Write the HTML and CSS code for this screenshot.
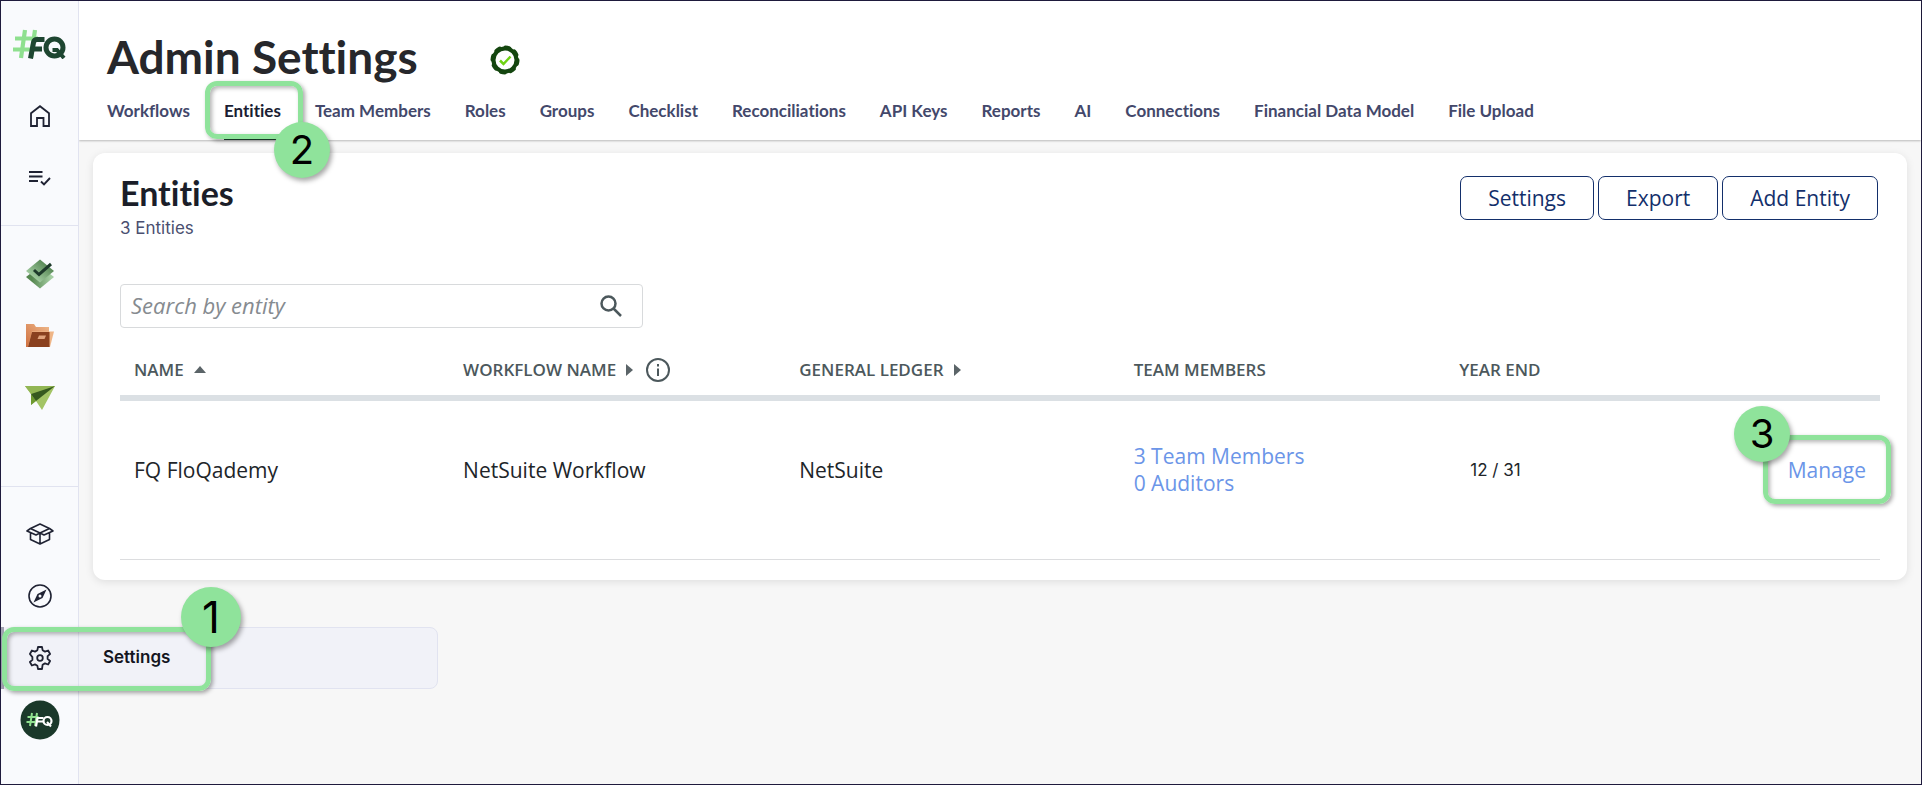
FILE: index.html
```
<!DOCTYPE html>
<html lang="en">
  <head>
    <meta charset="UTF-8" />
    <meta name="viewport" content="width=device-width, initial-scale=1.0" />
    <title>Admin Settings</title>
    <link rel="stylesheet" href="styles.css">
  </head>
  <body>
    <div class="app">
      <!-- Sidebar -->
      <nav class="sidebar" aria-label="Main">
        <a href="#" class="logo" aria-label="FloQast">
          <svg width="54" height="30" viewBox="0 0 54 30" fill="none">
            <path d="M12 1L8 29M22 1l-4 28M2 9.500h23M0 20.500h19" stroke="#8fe08f" stroke-width="4.200" />
            <path d="M17.500 29.500l3-16q.6-3 3.500-3h7.500M19 20h10" stroke="#1e4631" stroke-width="5" />
            <circle cx="41.500" cy="18.500" r="8.500" stroke="#1e4631" stroke-width="5" />
            <path d="M39.500 21h4.500l7 8" stroke="#1e4631" stroke-width="4" />
          </svg>
        </a>
        <div class="group group-top">
          <a href="#" class="item" aria-label="Home">
            <svg width="20" height="22" viewBox="0 0 20 22" fill="none" stroke="#1f2233" stroke-width="1.800">
              <path d="M1 21V8.200l9-7 9 7V21h-5.500v-8h-6.500v8z" />
            </svg>
          </a>
          <a href="#" class="item" aria-label="Tasks">
            <svg width="22" height="16" viewBox="0 0 22 16" fill="none" stroke="#1f2233" stroke-width="1.900">
              <path d="M0 2h13.500M0 6.500h13.500M0 11h9M12 11.500l3 3 6-6.500" />
            </svg>
          </a>
        </div>
        <div class="group group-apps">
          <a href="#" class="item" aria-label="Close">
            <svg width="28" height="30" viewBox="0 0 28 30">
              <defs>
                <linearGradient id="tile" x1="0" y1="1" x2="1" y2="0">
                  <stop offset="0.200" stop-color="#a6cfa4" />
                  <stop offset="0.800" stop-color="#548552" />
                </linearGradient>
                <linearGradient id="tileBack" x1="0" y1="0" x2="1" y2="0">
                  <stop offset="0.200" stop-color="#55864f" />
                  <stop offset="0.900" stop-color="#a6cfa4" />
                </linearGradient>
              </defs>
              <path d="M0 18l14-11 14 11-14 11.500z" fill="url(#tileBack)" />
              <path d="M0 12L14 0.500 28 12 14 23.500z" fill="url(#tile)" />
              <path d="M8 11l5 4.500L25 5" fill="none" stroke="#1e3a2b" stroke-width="3" />
            </svg>
          </a>
          <a href="#" class="item" aria-label="Documents">
            <svg width="28" height="24" viewBox="0 0 28 24">
              <defs>
                <linearGradient id="folder" x1="0" y1="1" x2="1" y2="0">
                  <stop offset="0" stop-color="#cf6f3f" />
                  <stop offset="1" stop-color="#efb98c" />
                </linearGradient>
              </defs>
              <path d="M0 0h8l2 3h13v20H0z" fill="url(#folder)" />
              <path d="M6 7.500h22L24 23H2z" fill="#efb587" />
              <path d="M6 8h17.500v15H2z" fill="#8a401f" />
              <path d="M13 11.500h7l-1.500 3.500h-7z" fill="#e0a27c" />
            </svg>
          </a>
          <a href="#" class="item" aria-label="Requests">
            <svg width="30" height="24" viewBox="0 0 30 24">
              <path d="M0 0h30L17 24 11 15l-5 4V8z" fill="#a3c465" />
              <path d="M0 0h30L6 8z" fill="#92b654" />
              <path d="M6 8l5 7-5 4z" fill="#6e9a30" />
              <path d="M30 0L11 15 6 8z" fill="#36591f" />
            </svg>
          </a>
        </div>
        <div class="group group-bottom">
          <a href="#" class="item" aria-label="Resources">
            <svg width="28" height="22" viewBox="0 0 28 22" fill="none" stroke="#1f2233" stroke-width="1.600" stroke-linejoin="round">
              <path d="M14 1L4.500 5.500 14 10l9.500-4.500zM4.500 5.500L1 8l9 4 4-2 4 2 9-4-3.500-2.500M4.500 10v6.500L14 21l9.500-4.500V10M14 10v11" />
            </svg>
          </a>
          <a href="#" class="item" aria-label="Explore">
            <svg width="24" height="24" viewBox="0 0 24 24" fill="none">
              <circle cx="12" cy="12" r="11" stroke="#1f2233" stroke-width="1.600" />
              <path fill-rule="evenodd" d="M18.500 5.500l-4 8.500-9 4.500 4-8.500zM12 10.500a1.500 1.500 0 1 0 0 3 1.500 1.500 0 0 0 0-3z" fill="#1f2233" />
            </svg>
          </a>
          <a href="#" class="item active" aria-label="Settings">
            <svg width="24" height="24" viewBox="0 0 24 24" fill="none" stroke="#1f2233" stroke-width="1.800" stroke-linejoin="round">
              <path d="M10 1h4l.6 3.200 2.400 1.400 3.100-1.100 2 3.500-2.500 2.100v2.800l2.500 2.100-2 3.500-3.100-1.100-2.400 1.400L14 23h-4l-.6-3.200L7 18.400l-3.100 1.100-2-3.500 2.500-2.100v-2.800L1.900 8l2-3.500L7 5.600l2.400-1.400z" />
              <circle cx="12" cy="12" r="2.800" />
            </svg>
          </a>
          <a href="#" class="item" aria-label="Profile">
            <svg width="40" height="40" viewBox="0 0 40 40" fill="none">
              <circle cx="20" cy="20" r="19.500" fill="#1a382a" />
              <path d="M12 13l-2 13M17 13l-2 13M7.500 17h11M6.500 22h9" stroke="#8fe08f" stroke-width="2" />
              <path d="M16 26.500l1.500-8.500h6M17 21.500h6" stroke="#fff" stroke-width="2.200" />
              <circle cx="27.500" cy="21" r="4" stroke="#fff" stroke-width="2.200" />
              <path d="M27 22l4 4.500" stroke="#fff" stroke-width="2" />
            </svg>
          </a>
        </div>
        <a href="#" class="flyout">Settings</a>
        <span class="highlight highlight-settings"></span>
        <span class="step step-settings">1</span>
      </nav>

      <div class="page">
        <header class="header">
          <div class="title">
            <h1>Admin Settings</h1>
            <svg width="30" height="30" viewBox="0 0 30 30" fill="none">
              <circle cx="15" cy="15" r="11.500" stroke="#14460f" stroke-width="4" />
              <circle cx="15" cy="15" r="12.500" stroke="#14460f" stroke-width="4" stroke-linecap="round" stroke-dasharray="4 5.817" />
              <path d="M10 15.500l3.500 3.500 7-7.500" stroke="#6fd314" stroke-width="2.500" />
            </svg>
          </div>
          <nav class="tabs" aria-label="Admin settings">
            <a href="#">Workflows</a>
            <a href="#" class="current">Entities
              <span class="highlight highlight-tab"></span>
              <span class="step step-tab">2</span>
            </a>
            <a href="#">Team Members</a>
            <a href="#">Roles</a>
            <a href="#">Groups</a>
            <a href="#">Checklist</a>
            <a href="#">Reconciliations</a>
            <a href="#">API Keys</a>
            <a href="#">Reports</a>
            <a href="#">AI</a>
            <a href="#">Connections</a>
            <a href="#">Financial Data Model</a>
            <a href="#">File Upload</a>
          </nav>
        </header>

        <main class="card">
          <div class="card-head">
            <div>
              <h2>Entities</h2>
              <p class="count">3 Entities</p>
            </div>
            <div class="actions">
              <button type="button">Settings</button>
              <button type="button">Export</button>
              <button type="button">Add Entity</button>
            </div>
          </div>

          <div class="search">
            <input type="text" id="search" placeholder="Search by entity" aria-label="Search by entity" />
            <svg width="22" height="22" viewBox="0 0 22 22" fill="none" stroke="#4c585c" stroke-width="2.500">
              <circle cx="8.500" cy="8.500" r="7" />
              <path d="M13.500 13.500l7.500 7.500" />
            </svg>
          </div>

          <table>
            <thead>
              <tr>
                <th class="col-name"><span class="th">Name <i class="up"></i></span></th>
                <th class="col-workflow">
                  <span class="th">Workflow Name <i class="right"></i>
                    <svg width="24" height="24" viewBox="0 0 24 24" fill="none" stroke="#4c585c" stroke-width="2">
                      <circle cx="12" cy="12" r="11" />
                      <path d="M12 10.500v7.500M12 6v2.500" />
                    </svg>
                  </span>
                </th>
                <th class="col-ledger"><span class="th">General Ledger <i class="right"></i></span></th>
                <th class="col-team">Team Members</th>
                <th class="col-year">Year End</th>
                <th></th>
              </tr>
            </thead>
            <tbody>
              <tr>
                <td>FQ FloQademy</td>
                <td>NetSuite Workflow</td>
                <td>NetSuite</td>
                <td><a href="#">3 Team Members</a><br /><a href="#">0 Auditors</a></td>
                <td class="year">12 / 31</td>
                <td class="manage">
                  <a href="#">Manage
                    <span class="highlight highlight-manage"></span>
                    <span class="step step-manage">3</span>
                  </a>
                </td>
              </tr>
            </tbody>
          </table>
        </main>
      </div>
    </div>
  </body>
</html>
```
FILE: styles.css
```
* {
  box-sizing: border-box;
}

body {
  margin: 0;
  font-family: "Open Sans", sans-serif;
  font-size: 21px;
  color: #212529;
}

a {
  color: #6b95e8;
  text-decoration: none;
}

.app {
  display: flex;
  min-height: 100vh;
  border: 1px solid #1f1b3d;
  background-color: #f7f7f7;
}

/* Sidebar */
.sidebar {
  position: relative;
  width: 78px;
  flex-shrink: 0;
  display: flex;
  flex-direction: column;
  background-color: #f9fafd;
  border-right: 1px solid #e1e3f0;
}

.logo {
  height: 84px;
  padding: 28px 0 0 12px;
}

.group {
  display: flex;
  flex-direction: column;
}

.group + .group {
  border-top: 1px solid #e1e3f0;
}

.group-top {
  height: 140px;
}

.group-apps {
  height: 261px;
  padding-top: 17px;
}

.group-bottom {
  padding-top: 16px;
}

.item {
  display: flex;
  align-items: center;
  justify-content: center;
  height: 62px;
}

.active {
  background-color: #f1f2f8;
  border-left: 3px solid #a3a3b3;
  padding-right: 3px;
}

.flyout {
  position: absolute;
  left: 77px;
  top: 626px;
  width: 360px;
  height: 62px;
  padding-left: 24px;
  border: 1px solid #e1e3f0;
  border-radius: 0 8px 8px 0;
  background-color: #f1f2f8;
  color: #14161f;
  font: 600 17px/58px Inter, sans-serif;
}

/* Walkthrough markers */
.highlight {
  position: absolute;
  border: 5px solid #8fe39b;
  border-radius: 12px;
  box-shadow: 2px 2px 4px rgba(0, 0, 0, 0.35), inset 2px 2px 4px rgba(0, 0, 0, 0.3);
}

.step {
  position: absolute;
  width: 56px;
  height: 56px;
  border-radius: 50%;
  background-color: #8fe39b;
  box-shadow: 2px 3px 5px rgba(0, 0, 0, 0.35);
  color: #000;
  font: 40px/56px Inter, sans-serif;
  text-align: center;
}

.highlight-settings {
  left: 1px;
  top: 626px;
  width: 209px;
  height: 64px;
}

.step-settings {
  left: 180px;
  top: 586px;
  width: 60px;
  height: 60px;
  font-size: 44px;
  line-height: 60px;
}

.highlight-tab {
  inset: -4px -22px -1px -19px;
}

.step-tab {
  right: -49px;
  top: 37px;
}

.highlight-manage {
  inset: -22px -25px -20px -25px;
}

.step-manage {
  right: 76px;
  top: -51px;
}

/* Header */
.page {
  flex: 1;
}

.header {
  padding: 28px 28px 0;
  background-color: #fff;
  box-shadow: 0 1px 2px rgba(0, 0, 0, 0.25);
}

.title {
  display: flex;
  align-items: center;
  gap: 72px;
}

.title svg {
  margin-top: 6px;
}

h1 {
  margin: 0;
  font: bold 46px/56px Lato, sans-serif;
  font-variant-ligatures: none;
  color: #26272b;
}

.tabs {
  display: flex;
  gap: 34px;
}

.tabs a {
  position: relative;
  height: 55px;
  padding-top: 14px;
  font: bold 17px/24px Lato, sans-serif;
  font-variant-ligatures: none;
  color: #43486b;
  white-space: nowrap;
}

.tabs .current {
  color: #1b1e33;
  border-bottom: 2px solid #1e4631;
}

/* Entities card */
.card {
  margin: 13px 14px 0;
  padding: 22px 27px 20px;
  background-color: #fff;
  border-radius: 12px;
  box-shadow: 0 2px 8px rgba(0, 0, 0, 0.1);
}

.card-head {
  display: flex;
  justify-content: space-between;
  align-items: flex-start;
}

h2 {
  margin: 0;
  font: bold 34px/36px Lato, sans-serif;
  font-variant-ligatures: none;
  color: #1b1e29;
}

.count {
  margin: 5px 0 0;
  font: 17px/24px Inter, sans-serif;
  color: #4a4f70;
}

.actions {
  display: flex;
  gap: 4px;
  padding: 1px 2px 0 0;
}

button {
  height: 44px;
  padding: 0 27px;
  border: 1px solid #132f6b;
  border-radius: 7px;
  background-color: #fff;
  color: #132f6b;
  font: 21px "Open Sans", sans-serif;
  cursor: pointer;
}

.search {
  display: flex;
  align-items: center;
  max-width: 523px;
  height: 44px;
  margin-top: 44px;
  padding: 0 20px 0 10px;
  border: 1px solid #d8dadc;
  border-radius: 4px;
}

.search input {
  flex: 1;
  min-width: 0;
  padding: 0 0 2px;
  border: none;
  outline: none;
  background: none;
  font: 22px/28px "Open Sans", sans-serif;
}

.search input::placeholder {
  font-style: italic;
  color: #868b90;
}

table {
  width: 100%;
  margin-top: 21px;
  border-collapse: collapse;
  table-layout: fixed;
}

th {
  height: 49px;
  padding: 0 0 5px 14px;
  border-bottom: 6px solid #dbe0e4;
  font-size: 17px;
  font-weight: 600;
  text-align: left;
  text-transform: uppercase;
  color: #4c585c;
}

.th {
  display: flex;
  align-items: center;
  gap: 10px;
}

.th svg {
  margin-left: 3px;
}

.up {
  border: 6px solid transparent;
  border-top: 0;
  border-bottom: 7px solid #5b6468;
}

.right {
  border: 6px solid transparent;
  border-right: 0;
  border-left: 7px solid #5b6468;
}

.col-name {
  width: 18.7%;
}

.col-workflow {
  width: 19.1%;
}

.col-ledger {
  width: 19%;
}

.col-team {
  width: 18.5%;
}

.col-year {
  width: 14%;
}

td {
  height: 161px;
  padding: 0 0 19px 14px;
  border-bottom: 1px solid #dcdddf;
  line-height: 27px;
}

.year {
  padding-left: 25px;
  font: 17px Inter, sans-serif;
}

.manage {
  text-align: right;
  padding-right: 14px;
}

.manage a {
  position: relative;
  display: inline-block;
}
```
